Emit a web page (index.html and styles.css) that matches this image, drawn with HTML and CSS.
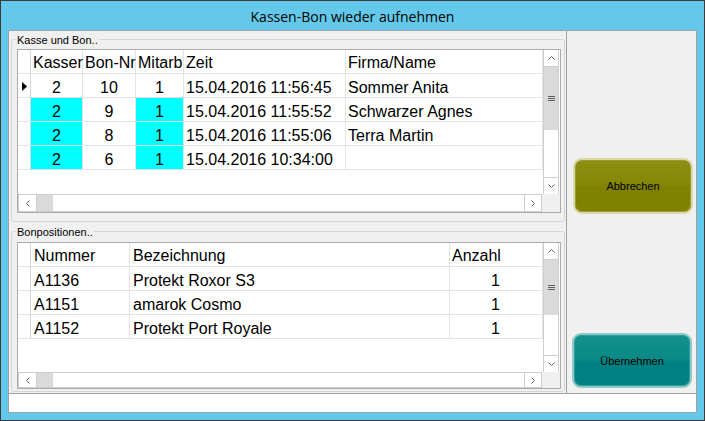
FILE: index.html
```html
<!DOCTYPE html>
<html lang="de">
<head>
<meta charset="utf-8">
<title>Kassen-Bon wieder aufnehmen</title>
<link rel="stylesheet" href="styles.css">
</head>
<body>
<div class="window">
  <div class="titlebar">Kassen-Bon wieder aufnehmen</div>
  <div class="client">
    <div class="main">
      <div class="leftpanel">
        <div class="group g1">
          <div class="legend">Kasse und Bon..</div>
          <div class="grid">
            <div class="gtop">
              <div class="table t1">
                <div class="row hd">
                  <div class="cell rh"></div>
                  <div class="cell">Kasser</div>
                  <div class="cell">Bon-Nr</div>
                  <div class="cell">Mitarb</div>
                  <div class="cell">Zeit</div>
                  <div class="cell">Firma/Name</div>
                </div>
                <div class="row">
                  <div class="cell rh"><svg class="cur" width="5" height="9" viewBox="0 0 5 9"><polygon points="0,0 5,4.5 0,9" fill="#000"/></svg></div>
                  <div class="cell c">2</div>
                  <div class="cell c">10</div>
                  <div class="cell c">1</div>
                  <div class="cell">15.04.2016 11:56:45</div>
                  <div class="cell">Sommer Anita</div>
                </div>
                <div class="row">
                  <div class="cell rh"></div>
                  <div class="cell c cyan">2</div>
                  <div class="cell c">9</div>
                  <div class="cell c cyan">1</div>
                  <div class="cell">15.04.2016 11:55:52</div>
                  <div class="cell">Schwarzer Agnes</div>
                </div>
                <div class="row">
                  <div class="cell rh"></div>
                  <div class="cell c cyan">2</div>
                  <div class="cell c">8</div>
                  <div class="cell c cyan">1</div>
                  <div class="cell">15.04.2016 11:55:06</div>
                  <div class="cell">Terra Martin</div>
                </div>
                <div class="row">
                  <div class="cell rh"></div>
                  <div class="cell c cyan">2</div>
                  <div class="cell c">6</div>
                  <div class="cell c cyan">1</div>
                  <div class="cell">15.04.2016 10:34:00</div>
                  <div class="cell"></div>
                </div>
              </div>
              <div class="vscroll">
                <div class="sbtn up"><svg width="7" height="4" viewBox="0 0 7 4"><polyline points="0.5,3.5 3.5,0.5 6.5,3.5" fill="none" stroke="#606060" stroke-width="1"/></svg></div>
                <div class="vthumb th1"><svg width="7" height="5" viewBox="0 0 7 5"><path d="M0 0.5H7M0 2.5H7M0 4.5H7" stroke="#606060" stroke-width="1"/></svg></div>
                <div class="track"></div>
                <div class="sbtn down"><svg width="7" height="4" viewBox="0 0 7 4"><polyline points="0.5,0.5 3.5,3.5 6.5,0.5" fill="none" stroke="#606060" stroke-width="1"/></svg></div>
              </div>
            </div>
            <div class="hrow hr1">
              <div class="hscroll">
                <div class="hbtn left"><svg width="4" height="7" viewBox="0 0 4 7"><polyline points="3.5,0.5 0.5,3.5 3.5,6.5" fill="none" stroke="#606060" stroke-width="1"/></svg></div>
                <div class="hthumb"></div>
                <div class="track"></div>
                <div class="hbtn right"><svg width="4" height="7" viewBox="0 0 4 7"><polyline points="0.5,0.5 3.5,3.5 0.5,6.5" fill="none" stroke="#606060" stroke-width="1"/></svg></div>
              </div>
              <div class="corner"></div>
            </div>
          </div>
        </div>
        <div class="group g2">
          <div class="legend">Bonpositionen..</div>
          <div class="grid">
            <div class="gtop">
              <div class="table t2">
                <div class="row hd">
                  <div class="cell rh"></div>
                  <div class="cell">Nummer</div>
                  <div class="cell">Bezeichnung</div>
                  <div class="cell">Anzahl</div>
                </div>
                <div class="row">
                  <div class="cell rh"></div>
                  <div class="cell">A1136</div>
                  <div class="cell">Protekt Roxor S3</div>
                  <div class="cell r">1</div>
                </div>
                <div class="row">
                  <div class="cell rh"></div>
                  <div class="cell">A1151</div>
                  <div class="cell">amarok Cosmo</div>
                  <div class="cell r">1</div>
                </div>
                <div class="row">
                  <div class="cell rh"></div>
                  <div class="cell">A1152</div>
                  <div class="cell">Protekt Port Royale</div>
                  <div class="cell r">1</div>
                </div>
              </div>
              <div class="vscroll">
                <div class="sbtn up"><svg width="7" height="4" viewBox="0 0 7 4"><polyline points="0.5,3.5 3.5,0.5 6.5,3.5" fill="none" stroke="#606060" stroke-width="1"/></svg></div>
                <div class="vthumb th2"><svg width="7" height="5" viewBox="0 0 7 5"><path d="M0 0.5H7M0 2.5H7M0 4.5H7" stroke="#606060" stroke-width="1"/></svg></div>
                <div class="track"></div>
                <div class="sbtn down"><svg width="7" height="4" viewBox="0 0 7 4"><polyline points="0.5,0.5 3.5,3.5 6.5,0.5" fill="none" stroke="#606060" stroke-width="1"/></svg></div>
              </div>
            </div>
            <div class="hrow hr2">
              <div class="hscroll">
                <div class="hbtn left"><svg width="4" height="7" viewBox="0 0 4 7"><polyline points="3.5,0.5 0.5,3.5 3.5,6.5" fill="none" stroke="#606060" stroke-width="1"/></svg></div>
                <div class="hthumb"></div>
                <div class="track"></div>
                <div class="hbtn right"><svg width="4" height="7" viewBox="0 0 4 7"><polyline points="0.5,0.5 3.5,3.5 0.5,6.5" fill="none" stroke="#606060" stroke-width="1"/></svg></div>
              </div>
              <div class="corner"></div>
            </div>
          </div>
        </div>
      </div>
      <div class="rightpanel">
        <button class="btn olive">Abbrechen</button>
        <button class="btn teal">Übernehmen</button>
      </div>
    </div>
    <div class="status"></div>
  </div>
</div>
</body>
</html>
```

FILE: styles.css
```css
html, body {
  margin: 0;
  padding: 0;
}
body {
  width: 705px;
  height: 421px;
  overflow: hidden;
  font-family: "Liberation Sans", Arial, sans-serif;
  color: #000;
}
.window {
  box-sizing: border-box;
  width: 705px;
  height: 421px;
  border: 1px solid #3b3b3b;
  background: #64c8ea;
  display: flex;
  flex-direction: column;
}
.titlebar {
  height: 29px;
  display: flex;
  align-items: center;
  justify-content: center;
  font-family: "Open Sans", "Noto Sans", sans-serif;
  font-size: 14px;
  color: #000;
  padding-top: 1px;
  box-sizing: border-box;
}
.client {
  margin: 0 7px 7px;
  height: 383px;
  display: flex;
  flex-direction: column;
  background: #f0f0f0;
}
.main {
  height: 363px;
  display: flex;
}
.leftpanel {
  width: 558px;
  box-sizing: border-box;
  border-left: 1px solid #a0a0a0;
  border-top: 1px solid #a0a0a0;
  display: flex;
  flex-direction: column;
}
.rightpanel {
  width: 131px;
  box-sizing: border-box;
  border: 1px solid #a0a0a0;
  border-bottom: none;
  display: flex;
  flex-direction: column;
  align-items: flex-start;
  padding-top: 127px;
}
.status {
  height: 20px;
  box-sizing: border-box;
  background: #fff;
  border: 1px solid #a0a0a0;
}
.group {
  margin-left: 2px;
  width: 554px;
  box-sizing: border-box;
  border: 1px solid #d5d5d5;
  border-radius: 3px;
}
.g1 {
  margin-top: 8px;
  height: 183px;
}
.g2 {
  margin-top: 9px;
  height: 161px;
}
.legend {
  margin: -6px 0 0 4px;
  padding: 0 1px;
  background: #f0f0f0;
  font-size: 11px;
  line-height: 12px;
  width: max-content;
}
.grid {
  margin: 3px 0 0 5px;
  width: 544px;
  box-sizing: border-box;
  border: 1px solid #ababab;
  background: #fff;
  display: flex;
  flex-direction: column;
}
.g1 .grid {
  height: 164px;
}
.g2 .grid {
  margin-top: 4px;
  height: 147px;
}
.gtop {
  display: flex;
  flex: 1;
  min-height: 0;
}
.table {
  width: 525px;
  overflow: hidden;
}
.row {
  display: grid;
  height: 24px;
}
.t1 .row {
  grid-template-columns: 13px 52px 53px 48px 162px 197px;
}
.t2 .row {
  grid-template-columns: 13px 99px 320px 93px;
}
.cell {
  box-sizing: border-box;
  border-right: 1px solid #e3e3e3;
  border-bottom: 1px solid #e3e3e3;
  padding: 4px 2px 0;
  line-height: 20px;
  font-size: 16px;
  white-space: nowrap;
  overflow: hidden;
}
.t2 .cell {
  padding-left: 3px;
}
.hd .cell {
  padding-top: 3px;
  overflow: visible;
}
.t2 .hd .cell:last-child {
  padding-left: 2px;
}
.cell.c {
  text-align: center;
}
.t2 .cell.r {
  text-align: right;
  padding-right: 42px;
}
.cell.cyan {
  background: #00ffff;
}
.cell.rh {
  padding: 0;
  border-right-color: #d5d5d5;
  display: flex;
  align-items: center;
}
.cur {
  margin-left: 4px;
  margin-top: 1px;
}
.vscroll {
  width: 16px;
  box-sizing: border-box;
  border-left: 1px solid #cdcdcd;
  border-right: 1px solid #cdcdcd;
  display: flex;
  flex-direction: column;
  background: #fff;
}
.sbtn {
  height: 17px;
  flex: none;
  box-sizing: border-box;
  display: flex;
  align-items: center;
  justify-content: center;
}
.sbtn.up {
  border-bottom: 1px solid #cdcdcd;
}
.sbtn.down {
  border-top: 1px solid #cdcdcd;
}
.vthumb {
  flex: none;
  background: #dadada;
  display: flex;
  align-items: center;
  justify-content: center;
}
.th1 {
  height: 63px;
}
.th2 {
  height: 55px;
}
.track {
  flex: 1;
}
.hrow {
  display: flex;
  flex: none;
}
.hr1 {
  height: 18px;
}
.hr2 {
  height: 16px;
}
.hscroll {
  width: 524px;
  box-sizing: border-box;
  border: 1px solid #cdcdcd;
  display: flex;
  background: #fff;
}
.hbtn {
  box-sizing: border-box;
  display: flex;
  align-items: center;
  justify-content: center;
}
.hbtn.left {
  width: 18px;
  border-right: 1px solid #cdcdcd;
}
.hbtn.right {
  width: 17px;
  border-left: 1px solid #cdcdcd;
}
.hthumb {
  width: 16px;
  background: #dadada;
}
.corner {
  flex: 1;
  background: #f0f0f0;
}
.btn {
  width: 120px;
  height: 56px;
  box-sizing: border-box;
  border-radius: 9px;
  border: 2px solid;
  font-family: "Liberation Sans", Arial, sans-serif;
  font-size: 11px;
  color: #000;
  display: flex;
  align-items: center;
  justify-content: center;
  padding: 0;
}
.olive {
  margin-left: 6px;
  border-color: #d8d8ac;
  background: linear-gradient(#8e8e14, #868608 46%, #808000 54%, #828202);
  box-shadow: inset 0 0 0 1px #9c9c2c;
}
.teal {
  margin-left: 5px;
  margin-top: 119px;
  height: 55px;
  border-color: #8ccaca;
  background: linear-gradient(#14918d, #0a8985 46%, #008080 54%, #028282);
  box-shadow: inset 0 0 0 1px #2c9c9c;
}
```
